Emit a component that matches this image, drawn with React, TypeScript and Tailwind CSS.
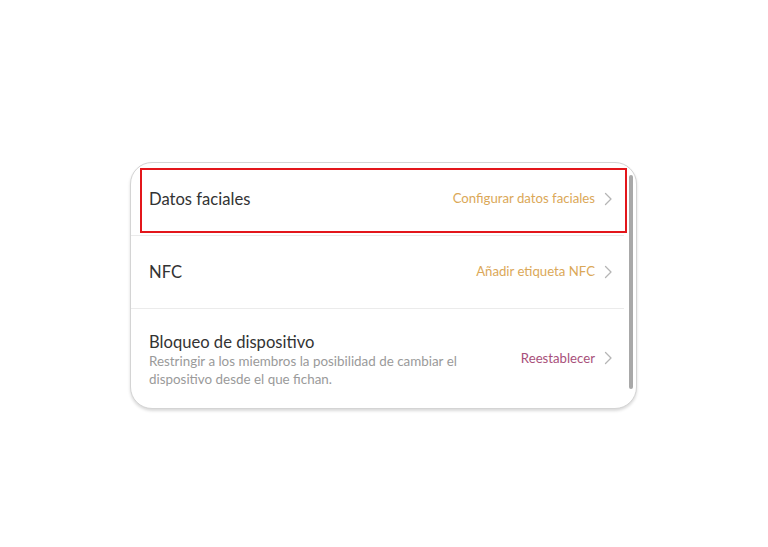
import React from "react";

function Chevron() {
  return (
    <svg width="9" height="14" viewBox="0 0 9 14" className="ml-[9px] shrink-0">
      <path d="M1.5 1.5 L7 7 L1.5 12.5" fill="none" stroke="#b5b5b5" strokeWidth="1.3" strokeLinecap="round" strokeLinejoin="round" />
    </svg>
  );
}

export default function App() {
  return (
    <div className="w-[768px] h-[547px] bg-white pt-[162px]" style={{ fontFamily: "Lato, 'Open Sans', sans-serif" }}>
      <div className="relative ml-[130px] w-[507px] h-[247px] rounded-[22px] border border-[#d4d4d4] bg-white shadow-[0_2px_3px_rgba(0,0,0,0.15)] overflow-hidden">
        <div className="flex flex-col pr-[12px]">
          <div className="h-[73px] flex items-center justify-between pl-[18px] pr-[11px] border-b border-[#ebebeb]">
            <span className="text-[16.6px] text-[#333]">Datos faciales</span>
            <span className="flex items-center text-[13.2px] text-[#dba858]">Configurar datos faciales<Chevron /></span>
          </div>
          <div className="h-[73px] flex items-center justify-between pl-[18px] pr-[11px] border-b border-[#ebebeb]">
            <span className="text-[16.6px] text-[#333]">NFC</span>
            <span className="flex items-center text-[13.2px] text-[#dba858]">Añadir etiqueta NFC<Chevron /></span>
          </div>
          <div className="h-[99px] flex items-center justify-between pl-[18px] pr-[11px]">
            <div className="flex flex-col pt-[2px]">
              <span className="text-[16.6px] leading-[20px] text-[#333]">Bloqueo de dispositivo</span>
              <span className="text-[13.4px] leading-[18px] text-[#9a9a9a] w-[330px]">Restringir a los miembros la posibilidad de cambiar el dispositivo desde el que fichan.</span>
            </div>
            <span className="flex items-center text-[13.2px] text-[#a8507a]">Reestablecer<Chevron /></span>
          </div>
        </div>
        <div className="absolute right-[3px] top-[12px] w-[4px] h-[214px] rounded-full bg-[#a8a8a8]" />
      </div>
      <div className="absolute left-[140px] top-[168px] w-[487px] h-[65px] border-2 border-[#e3161b] pointer-events-none" />
    </div>
  );
}
